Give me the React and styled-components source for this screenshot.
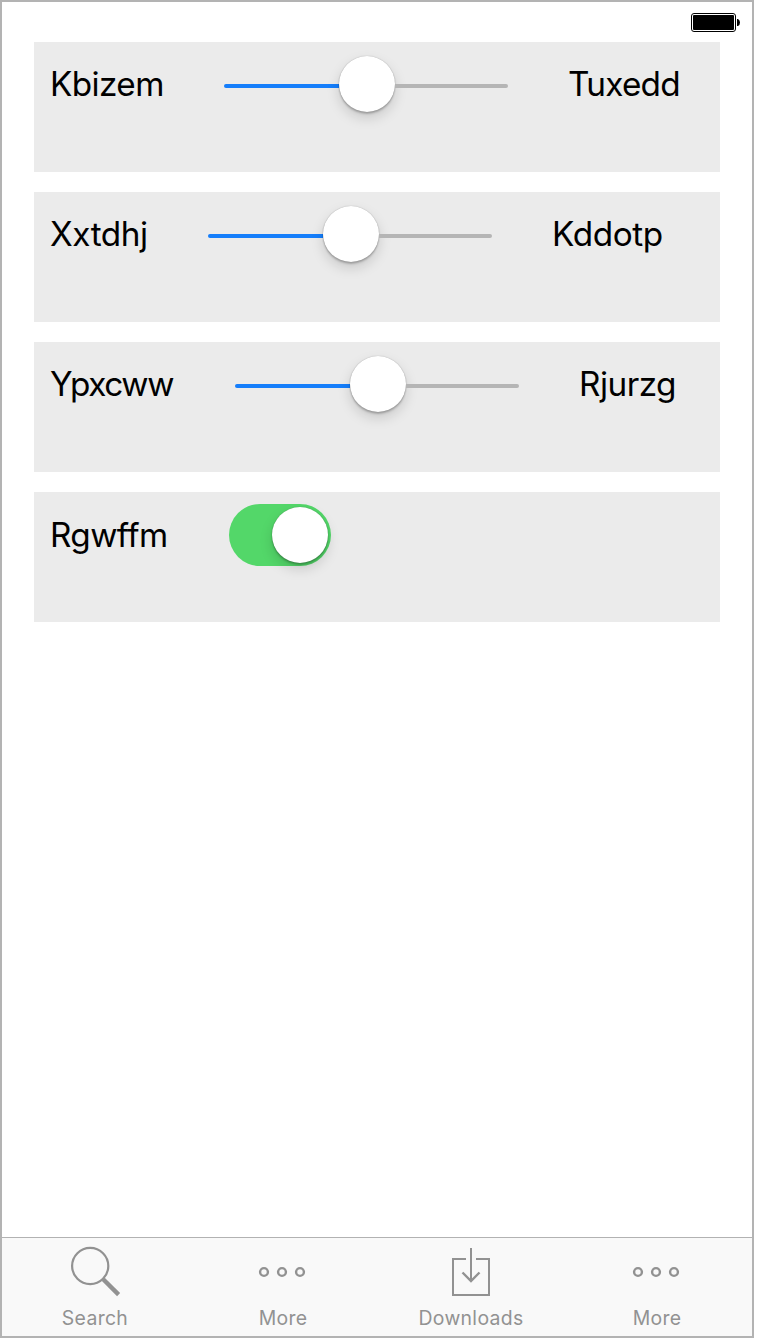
import React from "react";
import styled, { createGlobalStyle } from "styled-components";

const GlobalStyle = createGlobalStyle`
  * { box-sizing: border-box; }
  body { margin: 0; background: #fff; font-family: Inter, "Liberation Sans", sans-serif; }
`;

const Screen = styled.div`
  display: flex;
  flex-direction: column;
  width: 754px;
  height: 1338px;
  border: 2px solid #b3b3b3;
  background: #fff;
`;

const StatusBar = styled.header`
  display: flex;
  justify-content: flex-end;
  height: 40px;
  padding: 10px 11px 0 0;
`;

const Content = styled.main`
  flex: 1;
  display: flex;
  flex-direction: column;
  gap: 20px;
  padding: 0 32px;
`;

const Row = styled.section`
  display: flex;
  align-items: flex-start;
  gap: 60px;
  height: 130px;
  padding: 12px 16px;
  background: #ebebeb;
`;

const Label = styled.span`
  flex: none;
  width: ${(p) => p.$width}px;
  padding-top: ${(p) => p.$top ?? 10}px;
  font-size: 33.3px;
  line-height: 40px;
  letter-spacing: ${(p) => p.$tracking}px;
  white-space: nowrap;
  color: #000;
`;

const Slider = styled.div`
  flex: none;
  display: flex;
  align-items: center;
  width: 284px;
  height: 60px;
`;

const Track = styled.div`
  flex: ${(p) => (p.$filled ? "0 0 115px" : "1")};
  height: 4px;
  margin-top: 4px;
  border-radius: ${(p) => (p.$filled ? "2px 0 0 2px" : "0 2px 2px 0")};
  background: ${(p) => (p.$filled ? "#157efb" : "#b5b5b5")};
`;

const Knob = styled.div`
  flex: none;
  width: 56px;
  height: 56px;
  border-radius: 50%;
  background: #fff;
  box-shadow: 0 0 1px rgba(0, 0, 0, 0.35), 0 2px 2px rgba(0, 0, 0, 0.22),
    0 6px 13px rgba(0, 0, 0, 0.15);
`;

const Switch = styled.div`
  flex: none;
  display: flex;
  justify-content: flex-end;
  width: 102px;
  height: 62px;
  padding: 3px;
  border-radius: 31px;
  background: #53d769;
`;

const TabBar = styled.nav`
  display: flex;
  height: 99px;
  border-top: 1px solid #b2b2b2;
  background: #f9f9f9;
`;

const Tab = styled.div`
  flex: 0 0 ${(p) => p.$width}px;
  display: flex;
  flex-direction: column;
  align-items: center;
  padding-top: 8px;
  color: #929292;
`;

const TabIcon = styled.svg`
  display: block;
  width: 60px;
  height: 60px;
  fill: none;
  stroke: currentColor;
`;

const TabLabel = styled.span`
  font-size: 19.4px;
  line-height: 24px;
  letter-spacing: 0.33px;
`;

const Battery = () => (
  <svg width="50" height="22" viewBox="0 0 50 22">
    <rect x="0.5" y="1.5" width="44" height="18" rx="2.5" fill="#fff" stroke="#000" />
    <rect x="2" y="3" width="41" height="15" rx="1" fill="#000" />
    <path d="M46 7h1q2 1 2 3.5T47 14h-1z" fill="#000" />
  </svg>
);

const SearchIcon = () => (
  <TabIcon viewBox="0 0 60 60">
    <circle cx="25.2" cy="20" r="18.1" strokeWidth="2.2" />
    <path d="M38.2 33.2l15.4 15.4" strokeWidth="4.4" />
  </TabIcon>
);

const MoreIcon = () => (
  <TabIcon viewBox="0 0 60 60">
    {[11, 29, 47].map((x) => (
      <circle key={x} cx={x} cy="26" r="3.9" strokeWidth="2.4" />
    ))}
  </TabIcon>
);

const DownloadIcon = () => (
  <TabIcon viewBox="0 0 60 60">
    <path d="M25 13H12v36h36V13H35M30 2v33" strokeWidth="2" />
    <path d="M21.5 26.5l8.5 8.5 8.5-8.5" strokeWidth="2.4" />
  </TabIcon>
);

const sliders = [
  { left: "Kbizem", leftWidth: 114, leftTracking: -0.6, right: "Tuxedd", rightWidth: 112, rightTracking: -0.75 },
  { left: "Xxtdhj", leftWidth: 98, leftTracking: -0.45, right: "Kddotp", rightWidth: 112, rightTracking: -0.4 },
  { left: "Ypxcww", leftWidth: 125, leftTracking: -1.35, right: "Rjurzg", rightWidth: 98, rightTracking: -0.5 },
];

const tabs = [
  { name: "Search", Icon: SearchIcon, width: 186 },
  { name: "More", Icon: MoreIcon, width: 190 },
  { name: "Downloads", Icon: DownloadIcon, width: 186 },
  { name: "More", Icon: MoreIcon, width: 186 },
];

export default function App() {
  return (
    <>
      <GlobalStyle />
      <Screen>
        <StatusBar>
          <Battery />
        </StatusBar>
        <Content>
          {sliders.map((s) => (
            <Row key={s.left}>
              <Label $width={s.leftWidth} $tracking={s.leftTracking}>{s.left}</Label>
              <Slider>
                <Track $filled />
                <Knob />
                <Track />
              </Slider>
              <Label $width={s.rightWidth} $tracking={s.rightTracking}>{s.right}</Label>
            </Row>
          ))}
          <Row>
            <Label $width={119} $tracking={-0.6} $top={11}>Rgwffm</Label>
            <Switch>
              <Knob />
            </Switch>
          </Row>
        </Content>
        <TabBar>
          {tabs.map(({ name, Icon, width }, i) => (
            <Tab key={i} $width={width}>
              <Icon />
              <TabLabel>{name}</TabLabel>
            </Tab>
          ))}
        </TabBar>
      </Screen>
    </>
  );
}
